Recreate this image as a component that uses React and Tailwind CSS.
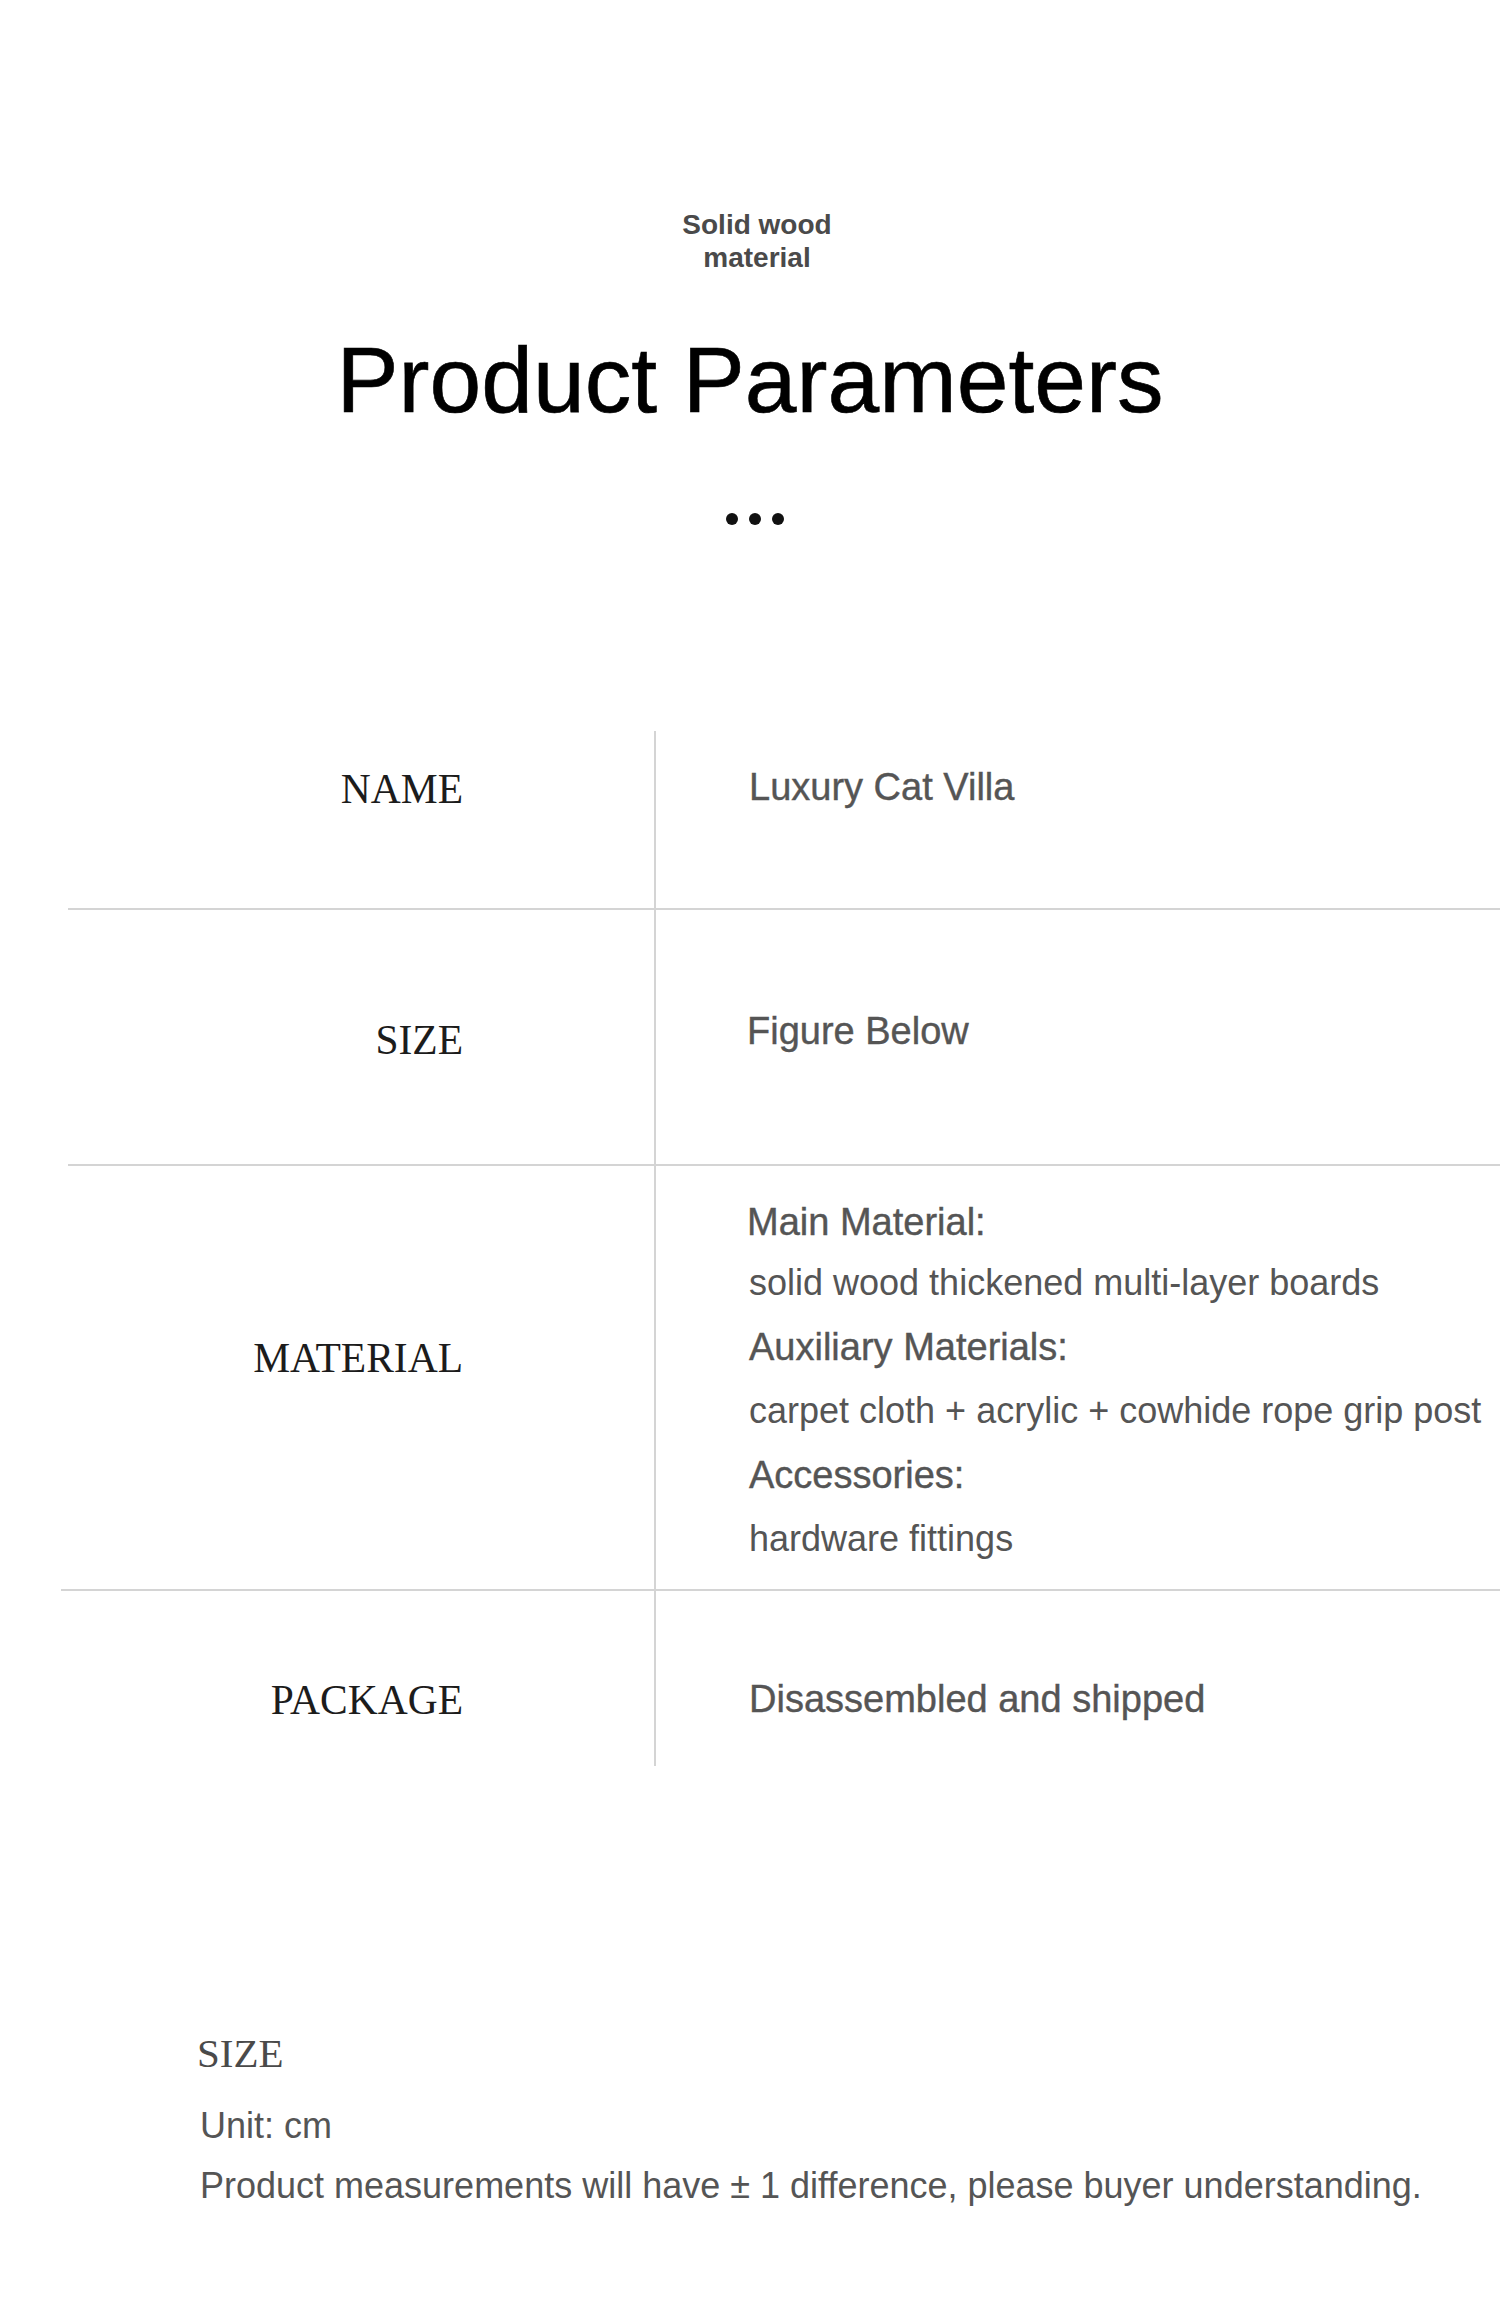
const sans = "font-['Liberation_Sans',Arial,sans-serif]";
const serif = "font-['Liberation_Serif','Times_New_Roman',serif]";

function Label({ children, pad }) {
  return (
    <div className={`w-[586px] shrink-0 text-right pr-[191px] ${pad}`}>
      <span className={`${serif} text-[41.5px] leading-[48px] text-[#1c1c1c]`}>{children}</span>
    </div>
  );
}

function Value({ children, pad }) {
  return (
    <div className={`flex-1 border-l-2 border-[#d4d4d4] pl-[93px] ${pad}`}>
      {children}
    </div>
  );
}

const strong = `${sans} text-[38px] leading-[44px] text-[#555] whitespace-nowrap [-webkit-text-stroke:0.4px_#555]`;
const plain = `${sans} text-[36px] leading-[64px] text-[#555] whitespace-nowrap`;

export default function App() {
  return (
    <div className="min-h-screen bg-white pt-[208px] pb-[130px]">
      {/* Header */}
      <div className="flex flex-col items-center">
        <div className={`${sans} ml-[14px] text-center text-[28px] leading-[33px] font-bold text-[#4a4a4a]`}>
          Solid wood
          <br />
          material
        </div>
        <h1 className={`${sans} mt-[61px] text-[93px] leading-[90px] text-black [-webkit-text-stroke:0.6px_#000]`}>
          Product Parameters
        </h1>
        <div className="mt-[88px] ml-[10px] flex gap-[11px]">
          <span className="w-[12px] h-[12px] rounded-full bg-[#111]" />
          <span className="w-[12px] h-[12px] rounded-full bg-[#111]" />
          <span className="w-[12px] h-[12px] rounded-full bg-[#111]" />
        </div>
      </div>

      {/* Parameter table */}
      <div className="mt-[206px] ml-[68px]">
        <div className="flex h-[177px]">
          <Label pad="pt-[34px]">NAME</Label>
          <Value pad="pt-[34px]">
            <div className={strong}>Luxury Cat Villa</div>
          </Value>
        </div>
        <div className="h-[2px] bg-[#d4d4d4]" />

        <div className="flex h-[254px]">
          <Label pad="pt-[106px]">SIZE</Label>
          <Value pad="pt-[99px]">
            <div className={`${strong} -ml-[2px]`}>Figure Below</div>
          </Value>
        </div>
        <div className="h-[2px] bg-[#d4d4d4]" />

        <div className="flex h-[423px]">
          <Label pad="pt-[168px]">MATERIAL</Label>
          <Value pad="pt-[27px]">
            <div className={`${strong} -ml-[2px] leading-[58px]`}>Main Material:</div>
            <div className={plain}>solid wood thickened multi-layer boards</div>
            <div className={`${strong} leading-[64px]`}>Auxiliary Materials:</div>
            <div className={plain}>carpet cloth + acrylic + cowhide rope grip post</div>
            <div className={`${strong} leading-[64px]`}>Accessories:</div>
            <div className={plain}>hardware fittings</div>
          </Value>
        </div>
        <div className="h-[2px] bg-[#d4d4d4] -ml-[7px]" />

        <div className="flex h-[175px]">
          <Label pad="pt-[85px]">PACKAGE</Label>
          <Value pad="pt-[86px]">
            <div className={strong}>Disassembled and shipped</div>
          </Value>
        </div>
      </div>

      {/* Size note */}
      <div className="mt-[263px] pl-[197px]">
        <div className={`${serif} text-[41px] leading-[48px] text-[#4a4a4a]`}>SIZE</div>
        <div className={`${sans} mt-[19px] pl-[3px] text-[36px] leading-[60px] text-[#555]`}>
          <div>Unit: cm</div>
          <div>Product measurements will have ± 1 difference, please buyer understanding.</div>
        </div>
      </div>
    </div>
  );
}
